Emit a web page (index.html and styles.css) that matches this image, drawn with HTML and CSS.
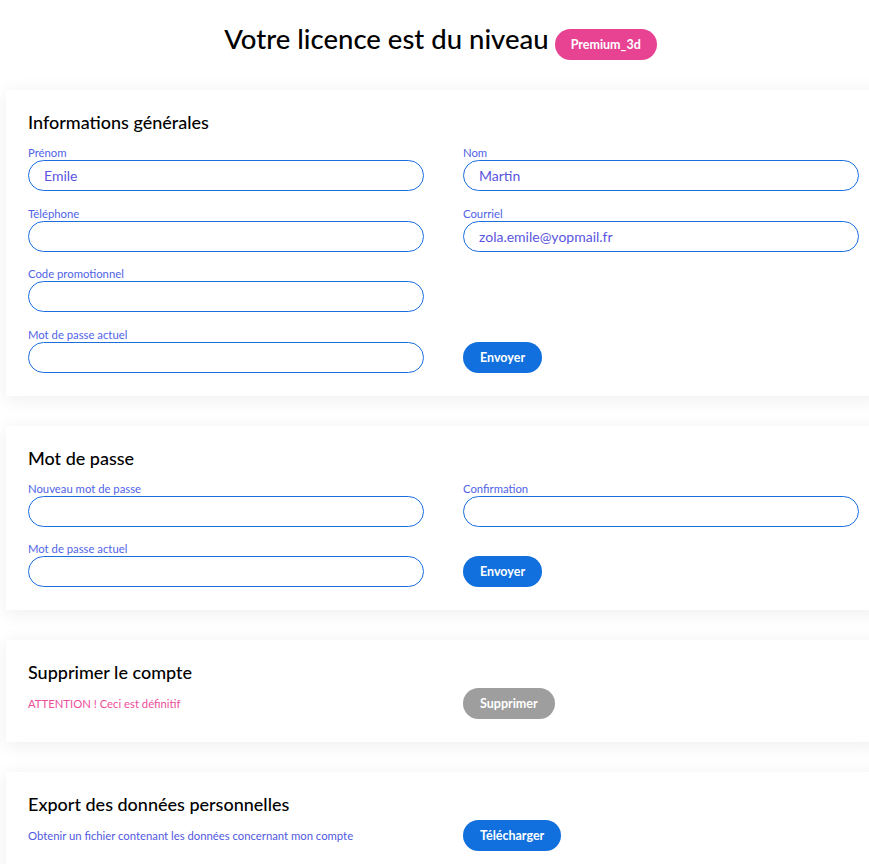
FILE: index.html
```
<!DOCTYPE html>
<html lang="fr">
<head>
    <meta charset="UTF-8">
    <title>Mon compte</title>
    <link rel="stylesheet" href="styles.css">
</head>
<body>
<div class="page">
    <div class="licence">
        <h1>Votre licence est du niveau</h1>
        <span class="badge">Premium_3d</span>
    </div>

    <div class="card">
        <h2>Informations générales</h2>
        <div class="grid">
            <div class="field">
                <label for="inp-prenom">Prénom</label>
                <input type="text" id="inp-prenom" value="Emile">
            </div>
            <div class="field">
                <label for="inp-nom">Nom</label>
                <input type="text" id="inp-nom" value="Martin">
            </div>
            <div class="field">
                <label for="inp-tel">Téléphone</label>
                <input type="text" id="inp-tel">
            </div>
            <div class="field">
                <label for="inp-mail">Courriel</label>
                <input type="text" id="inp-mail" value="zola.emile@yopmail.fr">
            </div>
            <div class="field">
                <label for="inp-promo">Code promotionnel</label>
                <input type="text" id="inp-promo">
            </div>
            <div></div>
            <div class="field">
                <label for="inp-pass1">Mot de passe actuel</label>
                <input type="password" id="inp-pass1">
            </div>
            <div class="cell-btn">
                <button class="btn">Envoyer</button>
            </div>
        </div>
    </div>

    <div class="card">
        <h2>Mot de passe</h2>
        <div class="grid">
            <div class="field">
                <label for="inp-new">Nouveau mot de passe</label>
                <input type="password" id="inp-new">
            </div>
            <div class="field">
                <label for="inp-conf">Confirmation</label>
                <input type="password" id="inp-conf">
            </div>
            <div class="field">
                <label for="inp-pass2">Mot de passe actuel</label>
                <input type="password" id="inp-pass2">
            </div>
            <div class="cell-btn">
                <button class="btn">Envoyer</button>
            </div>
        </div>
    </div>

    <div class="card">
        <h2 class="tight">Supprimer le compte</h2>
        <div class="grid action">
            <p class="warn">ATTENTION ! Ceci est définitif</p>
            <div><button class="btn btn-grey">Supprimer</button></div>
        </div>
    </div>

    <div class="card">
        <h2 class="tight">Export des données personnelles</h2>
        <div class="grid action">
            <p class="info">Obtenir un fichier contenant les données concernant mon compte</p>
            <div><button class="btn">Télécharger</button></div>
        </div>
    </div>
</div>
</body>
</html>
```
FILE: styles.css
```
html, body {
    margin: 0;
    padding: 0;
    background-color: white;
    overflow-x: hidden;
}
body {
    font-family: Lato, "Open Sans", sans-serif;
    color: #111;
}
.page {
    width: 875px;
    margin-left: 6px;
}

/* bandeau licence */
.licence {
    display: flex;
    justify-content: center;
    align-items: baseline;
    gap: 6px;
    padding: 22px 6px 0 0;
    margin-bottom: 30px;
}
.licence h1 {
    margin: 0;
    font-size: 27.5px;
    line-height: 34px;
    font-weight: 500;
    color: #000;
}
.badge {
    display: inline-block;
    background-color: #e84393;
    color: white;
    font-size: 12.5px;
    font-weight: bold;
    padding: 0 16px;
    line-height: 31px;
    border-radius: 16px;
}

/* cartes */
.card {
    background-color: white;
    box-shadow: 0 3px 18px rgba(0, 0, 0, 0.07);
    padding: 20px 22px 23px;
    margin-bottom: 30px;
}
.card h2 {
    margin: 0 0 12px;
    font-size: 18px;
    line-height: 24px;
    font-weight: 500;
    color: #000;
}
.card h2.tight {
    margin-bottom: 4px;
}
.grid {
    display: grid;
    grid-template-columns: 396px 396px;
    column-gap: 39px;
    row-gap: 15.5px;
}
.grid.action {
    align-items: center;
}
.field {
    display: flex;
    flex-direction: column;
}
.field label {
    font-size: 11.3px;
    line-height: 14px;
    color: #4f63e6;
}
.field input {
    box-sizing: border-box;
    height: 31px;
    border: 1px solid #1a6fdf;
    border-radius: 16px;
    padding: 0 15px;
    font-family: inherit;
    font-size: 14px;
    color: #5a55e0;
    outline: none;
}
.cell-btn {
    display: flex;
    align-items: flex-end;
}

/* boutons */
.btn {
    height: 31px;
    padding: 0 17px;
    border: none;
    border-radius: 16px;
    background-color: #1170dd;
    color: white;
    font-family: inherit;
    font-size: 12.5px;
    font-weight: bold;
    cursor: pointer;
}
.btn-grey {
    background-color: #9e9e9e;
}

.warn, .info {
    margin: 0;
    font-size: 11.3px;
}
.warn {
    color: #ec4d9a;
}
.info {
    color: #5158e0;
}
```
